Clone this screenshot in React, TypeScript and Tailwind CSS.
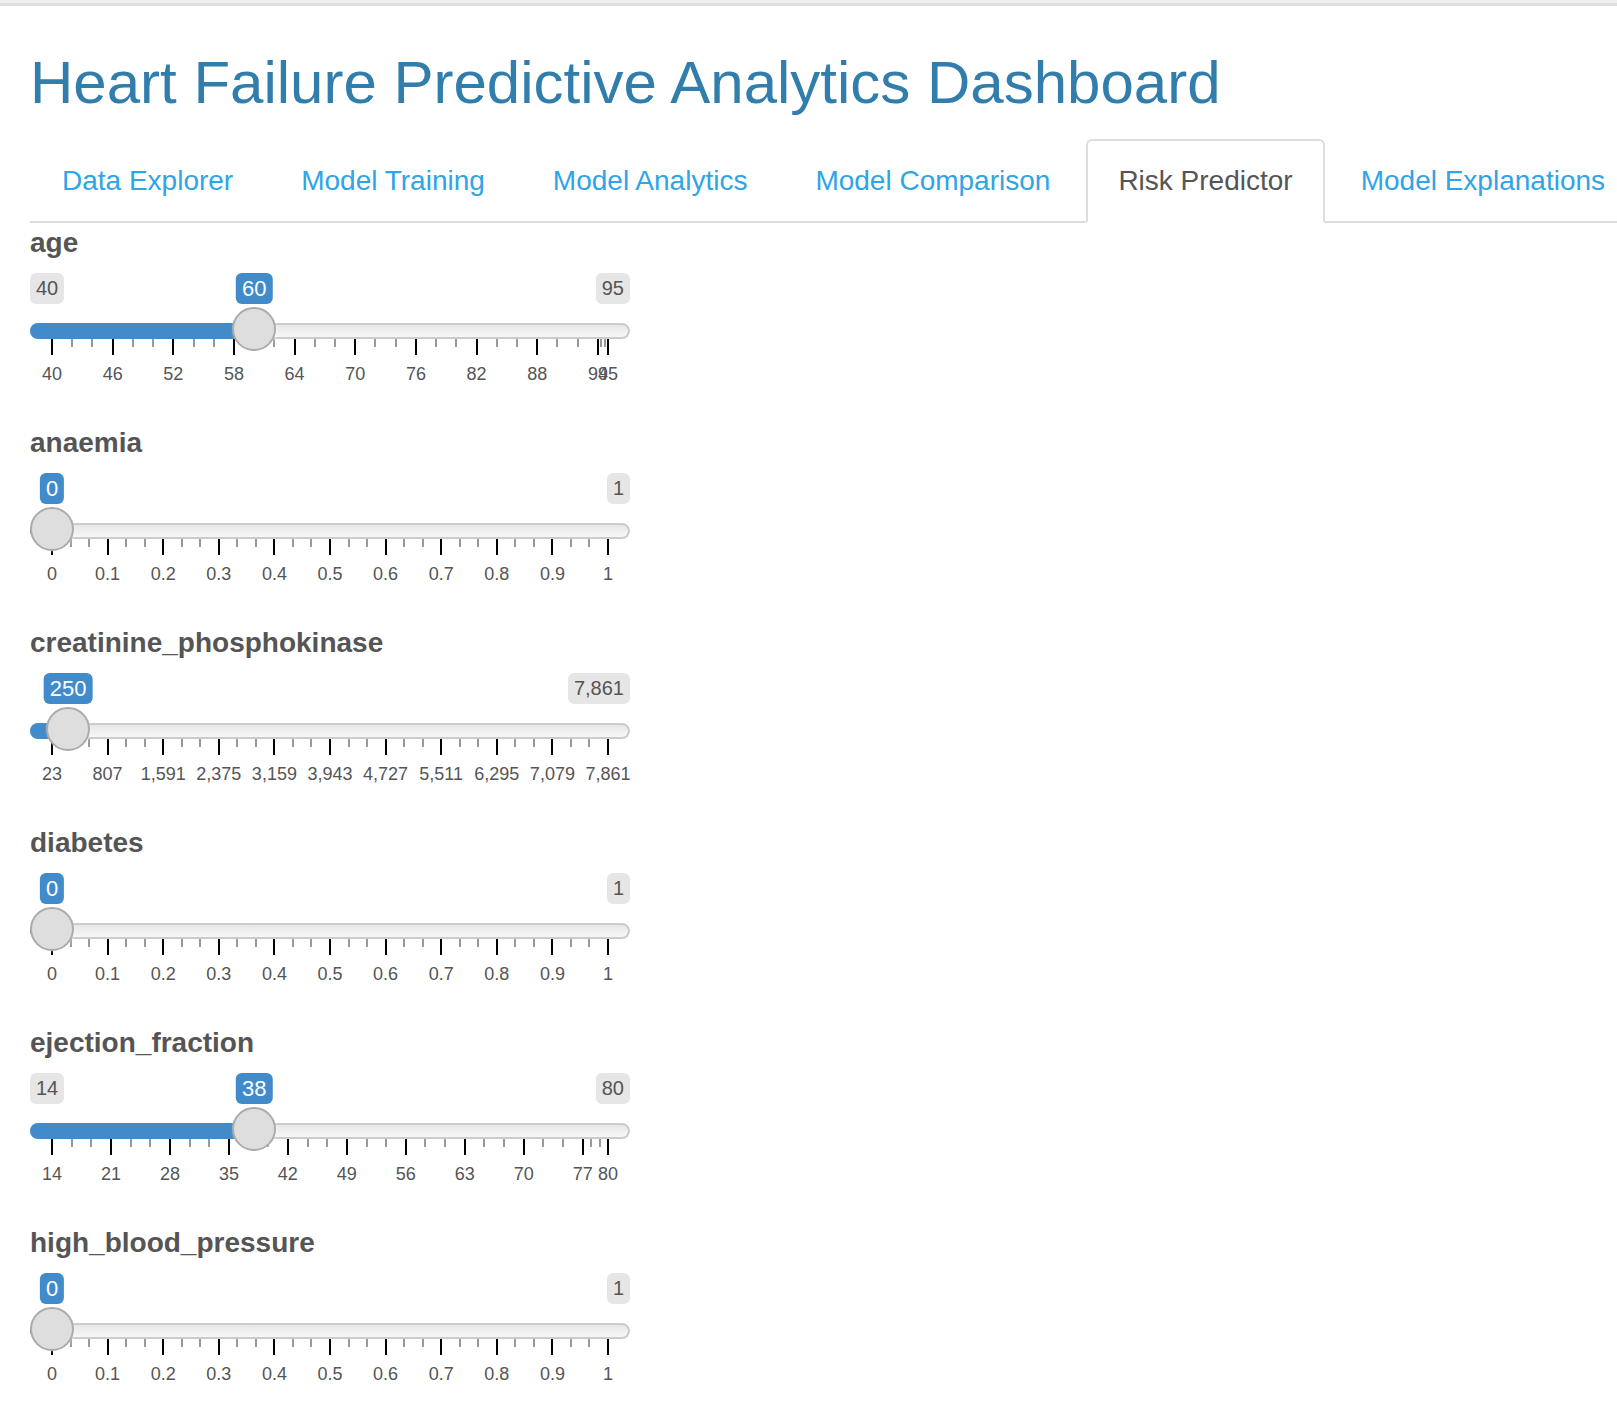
import React from "react";

type SliderDef = {
  label: string;
  min: number;
  max: number;
  value: number;
  grid: { v: number; t: string }[];
};

const TRACK = 600;
const HALF = 22; // half of the handle width
const SPAN = TRACK - HALF * 2;

const textW = (s: string, size: number) =>
  s.split("").reduce((w, c) => w + (c === "," || c === "." ? 0.278 : 0.556), 0) * size;

const fmt = (n: number) => n.toLocaleString("en-US", { maximumFractionDigits: 2 });

const byValue = (vals: number[]) => vals.map((v) => ({ v, t: fmt(v) }));

const binary = byValue([0, 0.1, 0.2, 0.3, 0.4, 0.5, 0.6, 0.7, 0.8, 0.9, 1]);

const cpkLabels = ["23", "807", "1,591", "2,375", "3,159", "3,943", "4,727", "5,511", "6,295", "7,079", "7,861"];

const sliders: SliderDef[] = [
  { label: "age", min: 40, max: 95, value: 60, grid: byValue([40, 46, 52, 58, 64, 70, 76, 82, 88, 94, 95]) },
  { label: "anaemia", min: 0, max: 1, value: 0, grid: binary },
  {
    label: "creatinine_phosphokinase",
    min: 23,
    max: 7861,
    value: 250,
    grid: cpkLabels.map((t, i) => ({ v: 23 + ((7861 - 23) * i) / 10, t })),
  },
  { label: "diabetes", min: 0, max: 1, value: 0, grid: binary },
  { label: "ejection_fraction", min: 14, max: 80, value: 38, grid: byValue([14, 21, 28, 35, 42, 49, 56, 63, 70, 77, 80]) },
  { label: "high_blood_pressure", min: 0, max: 1, value: 0, grid: binary },
];

const tabs = ["Data Explorer", "Model Training", "Model Analytics", "Model Comparison", "Risk Predictor", "Model Explanations"];

function RangeSlider({ s }: { s: SliderDef }) {
  const pos = (v: number) => HALF + ((v - s.min) / (s.max - s.min)) * SPAN;
  const handle = pos(s.value);
  const valText = fmt(s.value);
  const minText = fmt(s.min);
  const maxText = fmt(s.max);
  const singleW = textW(valText, 22) + 12;
  const minW = textW(minText, 20) + 12;
  const maxW = textW(maxText, 20) + 12;
  const showMin = handle - singleW / 2 > minW + 4;
  const showMax = handle + singleW / 2 < TRACK - maxW - 4;

  const smalls: number[] = [];
  for (let i = 1; i < s.grid.length; i++) {
    const a = s.grid[i - 1].v;
    const b = s.grid[i].v;
    smalls.push(a + (b - a) / 3, a + ((b - a) * 2) / 3);
  }

  return (
    <div className="mb-[30px] w-[600px]">
      <label className="mb-[10px] block text-[28px] font-bold leading-[40px] text-[#555]">{s.label}</label>
      <div className="relative h-[120px]">
        {/* min / max edge labels */}
        <div className="flex h-[31px] justify-between">
          <span
            className={
              showMin
                ? "rounded-[6px] bg-[#e6e6e6] px-[6px] py-[2px] text-[20px] leading-[27px] text-[#555]"
                : "invisible rounded-[6px] px-[6px] py-[2px] text-[20px] leading-[27px]"
            }
          >
            {minText}
          </span>
          <span
            className={
              showMax
                ? "rounded-[6px] bg-[#e6e6e6] px-[6px] py-[2px] text-[20px] leading-[27px] text-[#555]"
                : "invisible rounded-[6px] px-[6px] py-[2px] text-[20px] leading-[27px]"
            }
          >
            {maxText}
          </span>
        </div>
        <span
          className="absolute top-0 -translate-x-1/2 whitespace-nowrap rounded-[6px] bg-[#428bca] px-[6px] py-[1px] text-[22px] leading-[29px] text-white"
          style={{ left: handle }}
        >
          {valText}
        </span>

        <div className="mt-[19px] h-[16px] rounded-full border-2 border-[#cccccc] bg-[linear-gradient(to_bottom,#dedede_-50%,#ffffff_150%)]" />
        <div
          className="absolute left-0 top-[50px] h-[16px] rounded-l-full bg-[#428bca]"
          style={{ width: handle }}
        />

        {s.grid.map((g) => (
          <div key={"b" + g.v} className="absolute top-[66px] h-[16px] w-[2px] bg-black" style={{ left: pos(g.v) - 1 }} />
        ))}
        {smalls.map((v) => (
          <div key={"s" + v} className="absolute top-[66px] h-[8px] w-[2px] bg-[#999999]" style={{ left: pos(v) - 1 }} />
        ))}
        {s.grid.map((g) => (
          <span
            key={"t" + g.v}
            className="absolute top-[92px] -translate-x-1/2 whitespace-nowrap text-[18px] leading-[18px] text-[#555]"
            style={{ left: pos(g.v) }}
          >
            {g.t}
          </span>
        ))}

        <div
          className="absolute top-[34px] h-[44px] w-[44px] rounded-full border-2 border-[#ababab] bg-[#dedede] shadow-[1px_1px_3px_rgba(255,255,255,0.3)]"
          style={{ left: handle - HALF }}
        />
      </div>
    </div>
  );
}

const App = () => {
  return (
    <div className="min-h-screen overflow-hidden bg-white font-['Liberation_Sans',Arial,sans-serif] text-[#555]">
      <div className="h-[3px] bg-[#efeff1]" />
      <div className="h-[3px] bg-[#dfe0e4]" />
      <div className="px-[30px]">
        <h2 className="mb-[23px] mt-[44px] text-[60px] font-normal leading-[66px] text-[#317eac]">
          Heart Failure Predictive Analytics Dashboard
        </h2>

        <ul className="-mr-[30px] flex flex-nowrap whitespace-nowrap border-b-2 border-[#dddddd]">
          {tabs.map((t) => {
            const active = t === "Risk Predictor";
            return (
              <li key={t} className="-mb-[2px] mr-[4px] shrink-0">
                <a
                  className={
                    active
                      ? "block rounded-t-[6px] border-2 border-[#dddddd] border-b-transparent bg-white px-[30px] py-[20px] text-[28px] leading-[40px] text-[#555]"
                      : "block rounded-t-[6px] border-2 border-transparent px-[30px] py-[20px] text-[28px] leading-[40px] text-[#2fa4e7]"
                  }
                >
                  {t}
                </a>
              </li>
            );
          })}
        </ul>

        <div className="flex flex-col">
          {sliders.map((s) => (
            <RangeSlider key={s.label} s={s} />
          ))}
        </div>
      </div>
    </div>
  );
};

export default App;
